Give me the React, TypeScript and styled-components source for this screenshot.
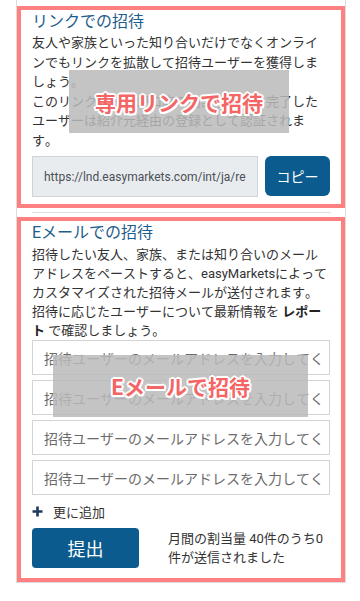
import React from "react";
import styled, { createGlobalStyle } from "styled-components";

const Global = createGlobalStyle`
  html, body { margin: 0; padding: 0; background: #fff; }
  body {
    font-family: Roboto, "Noto Sans CJK JP", sans-serif;
    color: #333;
    font-kerning: none;
    text-spacing-trim: space-all;
  }
  * { box-sizing: border-box; }
`;

const Page = styled.div`
  width: 360px;
  padding-left: 16px;
`;

const Card = styled.div`
  width: 330px;
  border: 1px solid #dcdcdc;
  border-top: none;
  padding-top: 6px;
`;

const Section = styled.section<{ $pb: number }>`
  position: relative;
  border: 4px solid #ff8080;
  padding: 0 11px ${(p) => p.$pb}px 11px;
`;

const Title = styled.h2`
  margin: 0;
  font-size: 16px;
  line-height: 23px;
  font-weight: 400;
  color: #1d5e8c;
`;

const Body = styled.p<{ $lh: number; $mt: number }>`
  margin: ${(p) => p.$mt}px 0 0;
  font-size: 13px;
  line-height: ${(p) => p.$lh}px;
  color: #333;
  b { font-weight: 700; color: #222; }
`;

const LinkRow = styled.div`
  display: flex;
  gap: 7px;
  margin-top: 6px;
  height: 41px;
`;

const UrlInput = styled.input`
  flex: 1;
  min-width: 0;
  height: 41px;
  border: 1px solid #ced4da;
  background: #e9ecef;
  padding: 0 11px;
  font-family: Roboto, sans-serif;
  font-size: 12px;
  color: #495057;
  outline: none;
`;

const CopyButton = styled.button`
  width: 65px;
  height: 40px;
  border: none;
  border-radius: 6px;
  background: #0b5b8e;
  color: #fff;
  font-family: "Noto Sans CJK JP", sans-serif;
  font-size: 14px;
  cursor: pointer;
`;

const Divider = styled.div`
  height: 1px;
  background: #dedede;
  margin: 4px 14px 4px 15px;
`;

const Fields = styled.div`
  display: flex;
  flex-direction: column;
  gap: 5px;
`;

const EmailInput = styled.input`
  height: 35px;
  width: 100%;
  border: 1px solid #d0d4d9;
  background: #fff;
  padding: 0 5px 0 11px;
  font-family: "Noto Sans CJK JP", sans-serif;
  font-size: 14px;
  font-kerning: none;
  outline: none;
  &::placeholder { color: #6b6b6b; }
`;

const AddMore = styled.div`
  display: flex;
  align-items: center;
  gap: 10px;
  margin-top: 7px;
  height: 19px;
  font-size: 13px;
  color: #333;
`;

const SubmitRow = styled.div`
  display: flex;
  align-items: center;
  gap: 29px;
  margin-top: 7px;
`;

const SubmitButton = styled.button`
  width: 107px;
  height: 40px;
  flex: none;
  border: none;
  border-radius: 4px;
  background: #0b5b8e;
  color: #fff;
  font-family: "Noto Sans CJK JP", sans-serif;
  font-size: 18px;
  cursor: pointer;
`;

const Quota = styled.div`
  font-size: 13px;
  line-height: 19px;
  color: #333;
`;

const Overlay = styled.div<{ $l: number; $t: number; $w: number; $h: number }>`
  position: absolute;
  left: ${(p) => p.$l}px;
  top: ${(p) => p.$t}px;
  width: ${(p) => p.$w}px;
  height: ${(p) => p.$h}px;
  background: rgba(186, 186, 186, 0.85);
  display: flex;
  align-items: center;
  justify-content: center;
  font-family: "Noto Sans CJK JP", sans-serif;
  font-weight: 700;
  font-size: 21px;
  color: #f46565;
  text-shadow: 2px 0 0 #fff, -2px 0 0 #fff, 0 2px 0 #fff, 0 -2px 0 #fff,
    1.5px 1.5px 0 #fff, -1.5px 1.5px 0 #fff, 1.5px -1.5px 0 #fff, -1.5px -1.5px 0 #fff;
`;

const PlusIcon = () => (
  <svg width="11" height="11" viewBox="0 0 11 11">
    <path d="M5.5 0.5v10M0.5 5.5h10" stroke="#1d3a5c" strokeWidth="2.6" />
  </svg>
);

export default function App() {
  return (
    <Page>
      <Global />
      <Card>
        <Section $pb={7}>
          <Title>リンクでの招待</Title>
          <Body $lh={19.5} $mt={0}>
            友人や家族といった知り合いだけでなくオンライ<br />
            ンでもリンクを拡散して招待ユーザーを獲得しま<br />
            しょう。
            <br />
            このリンクから新規口座の開設手続きを完了した<br />
            ユーザーは紹介元経由の登録として認証されま<br />
            す。
          </Body>
          <LinkRow>
            <UrlInput readOnly value="https://lnd.easymarkets.com/int/ja/referral?code=abc123" />
            <CopyButton>コピー</CopyButton>
          </LinkRow>
          <Overlay $l={48} $t={60} $w={220} $h={63}>専用リンクで招待</Overlay>
        </Section>
        <Divider />
        <Section $pb={10}>
          <Title>Eメールでの招待</Title>
          <Body $lh={19} $mt={1}>
            招待したい友人、家族、または知り合いのメール<br />
            アドレスをペーストすると、easyMarketsによって<br />
            カスタマイズされた招待メールが送付されます。
            <br />
            招待に応じたユーザーについて最新情報を <b>レポー<br />ト</b> で確認しましょう。
          </Body>
          <Fields>
            {[0, 1, 2, 3].map((i) => (
              <EmailInput key={i} placeholder="招待ユーザーのメールアドレスを入力してください" />
            ))}
          </Fields>
          <AddMore>
            <PlusIcon />
            <span>更に追加</span>
          </AddMore>
          <SubmitRow>
            <SubmitButton>提出</SubmitButton>
            <Quota>月間の割当量 40件のうち0件が送信されました</Quota>
          </SubmitRow>
          <Overlay $l={32} $t={134} $w={255} $h={62}>Eメールで招待</Overlay>
        </Section>
      </Card>
    </Page>
  );
}
